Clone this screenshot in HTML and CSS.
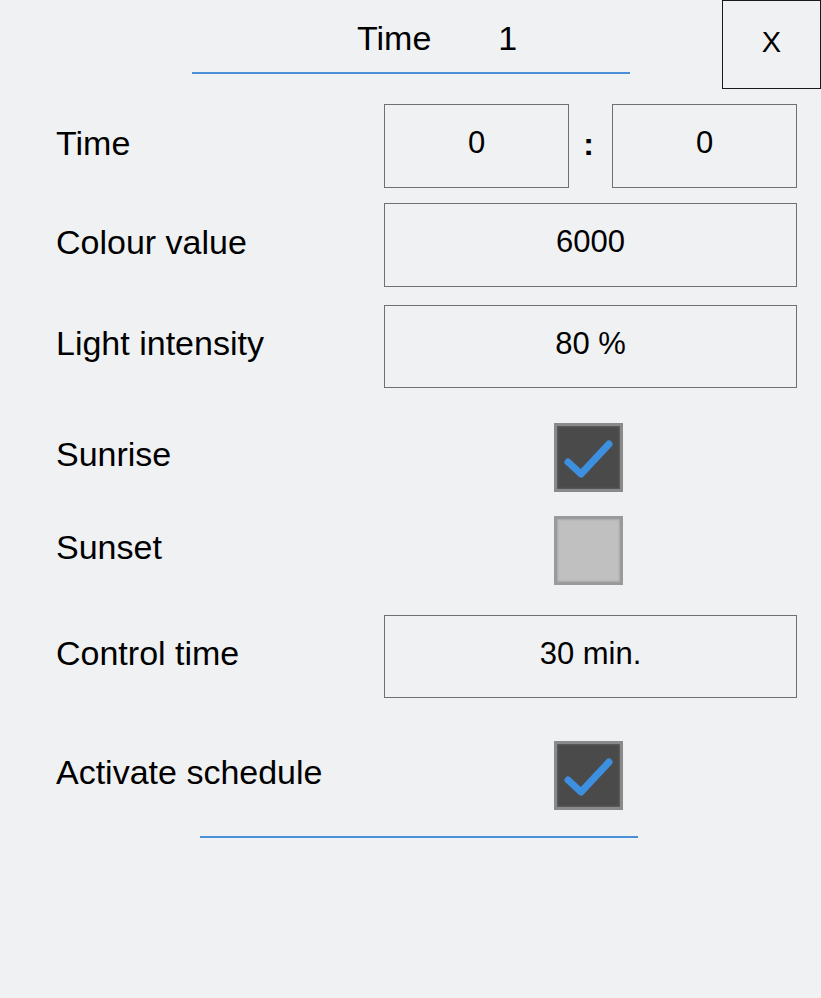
FILE: index.html
```html
<!DOCTYPE html>
<html lang="en">
<head>
    <meta charset="UTF-8">
    <meta name="viewport" content="width=device-width, initial-scale=1.0">
    <title>Schedule Time 1</title>
    <link rel="stylesheet" href="styles.css">
</head>
<body>
    <div class="panel">
        <div class="header">
            <div class="title">
                <span>Time</span>
                <span class="title-num">1</span>
            </div>
            <button class="close-btn">X</button>
        </div>

        <div class="row row-time">
            <div class="label">Time</div>
            <div class="control">
                <div class="field field-half">0</div>
                <div class="colon">:</div>
                <div class="field field-half">0</div>
            </div>
        </div>

        <div class="row row-colour">
            <div class="label">Colour value</div>
            <div class="control">
                <div class="field">6000</div>
            </div>
        </div>

        <div class="row row-light">
            <div class="label">Light intensity</div>
            <div class="control">
                <div class="field">80 %</div>
            </div>
        </div>

        <div class="row row-check row-sunrise">
            <div class="label">Sunrise</div>
            <div class="control">
                <div class="checkbox checked">
                    <svg viewBox="0 0 62 62" width="62" height="62">
                        <path d="M10 35 L23 47 L51 17" fill="none" stroke="#3d8fe0" stroke-width="7" stroke-linecap="round" stroke-linejoin="round"/>
                    </svg>
                </div>
            </div>
        </div>

        <div class="row row-check row-sunset">
            <div class="label">Sunset</div>
            <div class="control">
                <div class="checkbox"></div>
            </div>
        </div>

        <div class="row row-control">
            <div class="label">Control time</div>
            <div class="control">
                <div class="field">30 min.</div>
            </div>
        </div>

        <div class="row row-check row-activate">
            <div class="label">Activate schedule</div>
            <div class="control">
                <div class="checkbox checked">
                    <svg viewBox="0 0 62 62" width="62" height="62">
                        <path d="M10 35 L23 47 L51 17" fill="none" stroke="#3d8fe0" stroke-width="7" stroke-linecap="round" stroke-linejoin="round"/>
                    </svg>
                </div>
            </div>
        </div>

        <div class="footer-line"></div>
    </div>
</body>
</html>
```

FILE: styles.css
```css
body {
    margin: 0;
    background-color: #f0f1f3;
    font-family: "Liberation Sans", Arial, sans-serif;
    color: #000;
}

.panel {
    width: 821px;
    height: 998px;
}

/* Header */
.header {
    display: flex;
    height: 88px;
}

.title {
    width: 273px;
    height: 68px;
    margin-left: 192px;
    padding-left: 165px;
    padding-top: 4px;
    border-bottom: 2px solid #4a90d9;
    display: flex;
    align-items: center;
    font-size: 34px;
}

.title-num {
    margin-left: 67px;
}

.close-btn {
    margin-left: auto;
    width: 99px;
    height: 89px;
    border: 1px solid #1a1a1a;
    background: transparent;
    font-family: "Liberation Sans", Arial, sans-serif;
    font-size: 29px;
    padding: 0 0 4px 0;
    color: #000;
}

/* Rows */
.row {
    display: flex;
    align-items: center;
    padding-left: 56px;
}

.label {
    width: 328px;
    font-size: 34px;
    padding-bottom: 6px;
}

.control {
    width: 413px;
    display: flex;
    align-items: center;
}

.field {
    box-sizing: border-box;
    width: 413px;
    height: 84px;
    border: 1px solid #707070;
    display: flex;
    align-items: center;
    justify-content: center;
    font-size: 31px;
    padding-bottom: 6px;
}

.field-half {
    width: 185px;
    flex-shrink: 0;
}

.colon {
    box-sizing: border-box;
    width: 43px;
    flex-shrink: 0;
    padding-right: 4px;
    padding-bottom: 4px;
    text-align: center;
    font-size: 32px;
    font-weight: bold;
}

.row-time { margin-top: 16px; }
.row-colour { margin-top: 15px; }
.row-light { margin-top: 18px; }
.row-light .field { height: 83px; }
.row-sunrise { margin-top: 35px; }
.row-sunset { margin-top: 24px; }
.row-control { margin-top: 30px; }
.row-control .field { height: 83px; }
.row-activate { margin-top: 43px; }

/* Checkboxes */
.checkbox {
    box-sizing: border-box;
    width: 69px;
    height: 69px;
    margin-left: 170px;
    border: 3px solid #9a9a9a;
    background-color: #c0c0c0;
    box-shadow: inset 0 0 2px 1px #a9a9a9;
    display: flex;
    align-items: center;
    justify-content: center;
}

.checkbox.checked {
    border-color: #8a8a8a;
    background-color: #4a4a4a;
    box-shadow: inset 0 0 2px 1px #5e5e5e;
}

.checkbox svg {
    display: block;
}

.footer-line {
    margin-top: 26px;
    margin-left: 200px;
    width: 438px;
    height: 2px;
    background-color: #4a90d9;
}
```
